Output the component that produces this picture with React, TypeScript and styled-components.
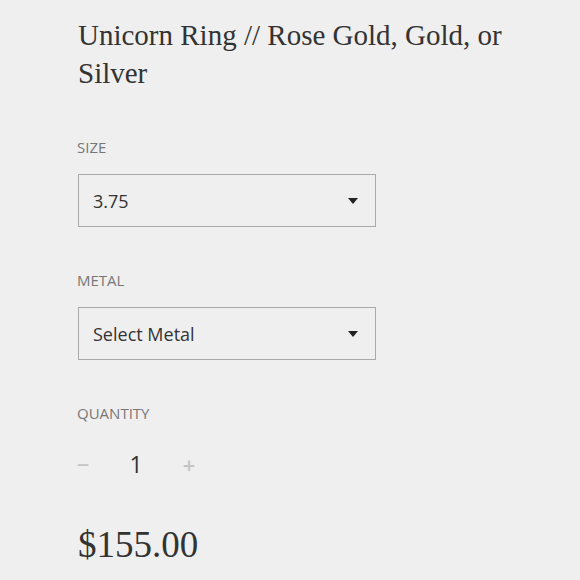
import React, { useState } from 'react';
import styled, { createGlobalStyle } from 'styled-components';

const GlobalStyle = createGlobalStyle`
  html, body {
    margin: 0;
    padding: 0;
    background: #efefef;
  }
  * { box-sizing: border-box; }
`;

const Page = styled.div`
  width: 580px;
  height: 580px;
  overflow: hidden;
  padding: 16px 0 0 78px;
  background: #efefef;
`;

const Title = styled.h1`
  margin: 0;
  width: 440px;
  font-family: 'Liberation Serif', serif;
  font-weight: 400;
  font-size: 29px;
  line-height: 38px;
  color: #333;
`;

const Field = styled.div<{ $gap: number }>`
  margin-top: ${(p) => p.$gap}px;
`;

const Label = styled.div`
  font-family: 'Open Sans', sans-serif;
  font-size: 15px;
  line-height: 20px;
  color: #777;
  text-transform: uppercase;
  margin-left: -1px;
`;

const SelectBox = styled.div`
  margin-top: 17px;
  width: 298px;
  height: 53px;
  border: 1px solid #a9a9a9;
  display: flex;
  align-items: center;
  justify-content: space-between;
  padding: 0 17px 0 14px;
  font-family: 'Open Sans', sans-serif;
  font-size: 18px;
  color: #333;
`;

const Caret = styled.span`
  width: 0;
  height: 0;
  border-left: 5px solid transparent;
  border-right: 5px solid transparent;
  border-top: 6px solid #222;
`;

const QtyRow = styled.div`
  margin-top: 24px;
  display: flex;
  align-items: center;
  font-family: 'Open Sans', sans-serif;
  height: 34px;
  margin-left: -2px;
`;

const QtyButton = styled.span`
  width: 14px;
  font-size: 22px;
  font-weight: 600;
  color: #c4c4c4;
  text-align: center;
`;

const QtyValue = styled.span`
  width: 92px;
  text-align: center;
  font-size: 23px;
  color: #333;
`;

const Price = styled.div`
  margin-top: 44px;
  font-family: 'Liberation Serif', serif;
  font-size: 37px;
  line-height: 40px;
  color: #333;
`;

function Select({ value }: { value: string }) {
  return (
    <SelectBox>
      <span>{value}</span>
      <Caret />
    </SelectBox>
  );
}

export default function App() {
  const [qty] = useState(1);
  return (
    <>
      <GlobalStyle />
      <Page>
        <Title>Unicorn Ring // Rose Gold, Gold, or Silver</Title>
        <Field $gap={45}>
          <Label>Size</Label>
          <Select value="3.75" />
        </Field>
        <Field $gap={43}>
          <Label>Metal</Label>
          <Select value="Select Metal" />
        </Field>
        <Field $gap={43}>
          <Label>Quantity</Label>
          <QtyRow>
            <QtyButton>−</QtyButton>
            <QtyValue>{qty}</QtyValue>
            <QtyButton>+</QtyButton>
          </QtyRow>
        </Field>
        <Price>$155.00</Price>
      </Page>
    </>
  );
}
